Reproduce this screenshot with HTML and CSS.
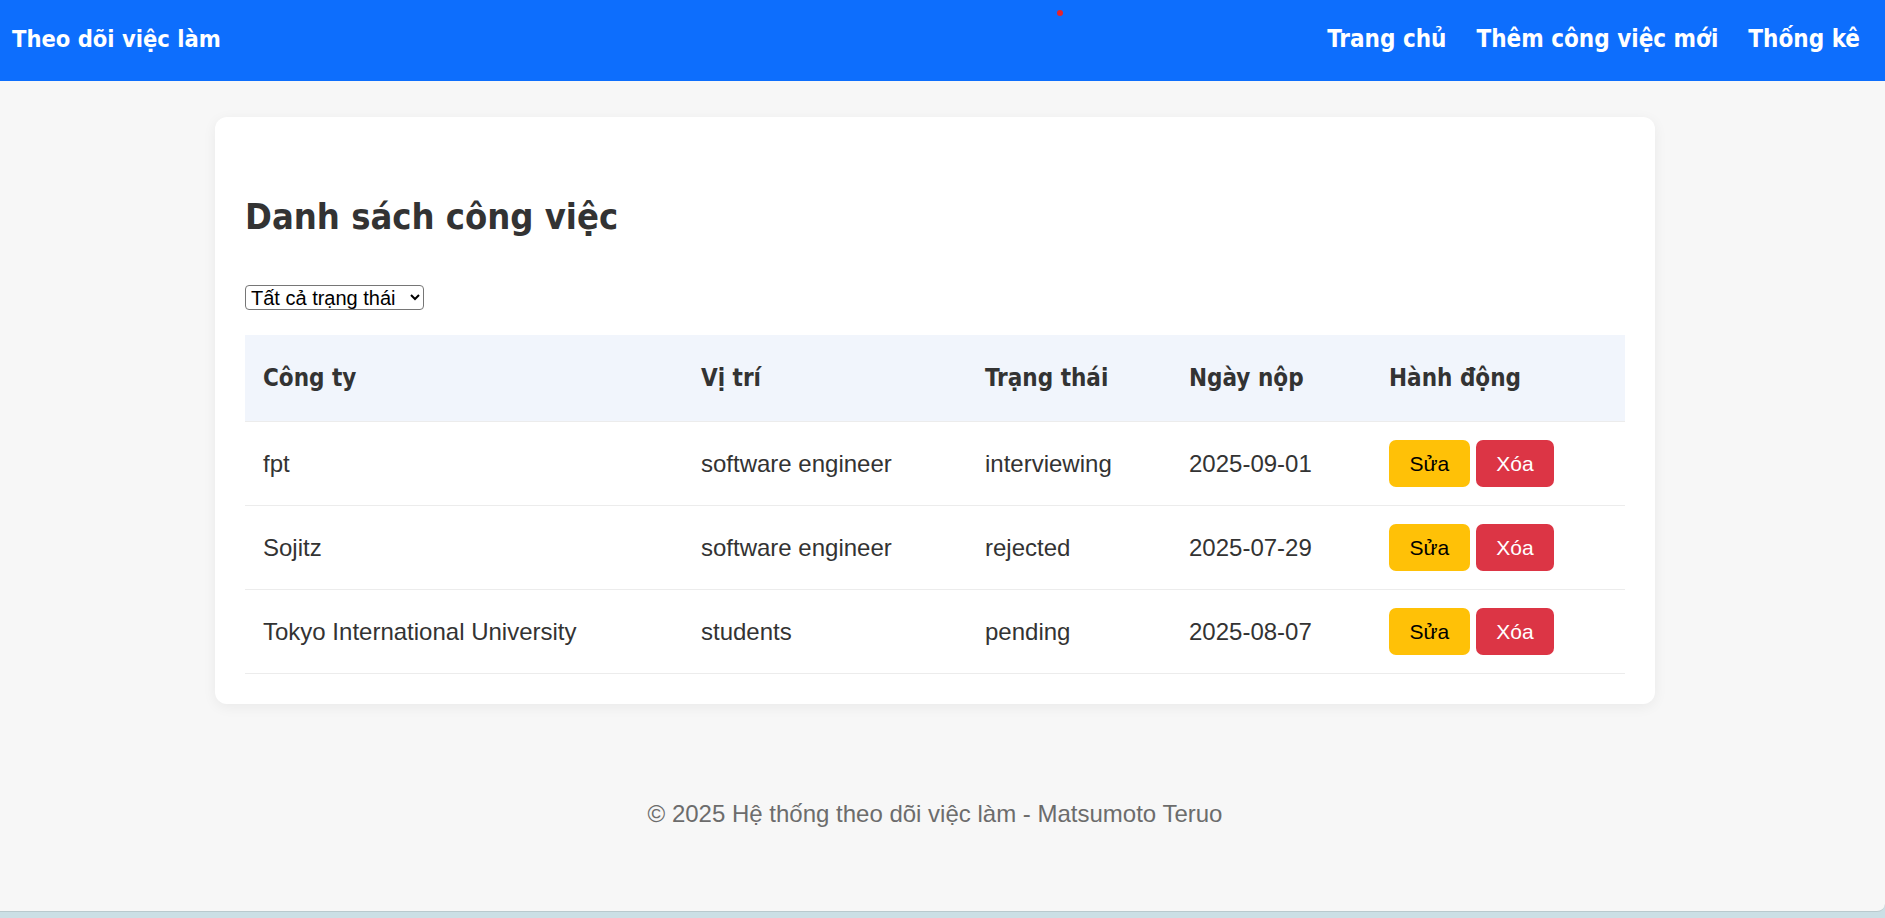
FILE: index.html
```html
<!DOCTYPE html>
<html lang="vi">
<head>
<meta charset="utf-8">
<title>Theo dõi việc làm</title>
<link rel="stylesheet" href="styles.css">
</head>
<body>
<div class="window">
  <header class="topbar">
    <div class="brand">Theo dõi việc làm</div>
    <nav class="nav">
      <a href="#">Trang chủ</a>
      <a href="#">Thêm công việc mới</a>
      <a href="#">Thống kê</a>
    </nav>
    <span class="dot"></span>
  </header>

  <main class="main">
    <section class="card">
      <h2 class="title">Danh sách công việc</h2>
      <div class="filter">
        <select class="status-select">
          <option>Tất cả trạng thái</option>
          <option>pending</option>
          <option>interviewing</option>
          <option>rejected</option>
        </select>
      </div>
      <table class="jobs">
        <thead>
          <tr>
            <th class="c-company">Công ty</th>
            <th class="c-position">Vị trí</th>
            <th class="c-status">Trạng thái</th>
            <th class="c-date">Ngày nộp</th>
            <th class="c-actions">Hành động</th>
          </tr>
        </thead>
        <tbody>
          <tr>
            <td>fpt</td>
            <td>software engineer</td>
            <td>interviewing</td>
            <td>2025-09-01</td>
            <td><div class="actions"><button class="btn btn-edit">Sửa</button><button class="btn btn-delete">Xóa</button></div></td>
          </tr>
          <tr>
            <td>Sojitz</td>
            <td>software engineer</td>
            <td>rejected</td>
            <td>2025-07-29</td>
            <td><div class="actions"><button class="btn btn-edit">Sửa</button><button class="btn btn-delete">Xóa</button></div></td>
          </tr>
          <tr>
            <td>Tokyo International University</td>
            <td>students</td>
            <td>pending</td>
            <td>2025-08-07</td>
            <td><div class="actions"><button class="btn btn-edit">Sửa</button><button class="btn btn-delete">Xóa</button></div></td>
          </tr>
        </tbody>
      </table>
    </section>
  </main>

  <footer class="footer">© 2025 Hệ thống theo dõi việc làm - Matsumoto Teruo</footer>
</div>
</body>
</html>
```

FILE: styles.css
```css
html, body {
  margin: 0;
  padding: 0;
}

body {
  background: #cbdfe5;
  font-family: "Liberation Sans", Arial, sans-serif;
  font-size: 24px;
  color: #333;
  height: 918px;
  overflow: hidden;
}

.window {
  height: 911px;
  background: #f7f7f7;
  border-bottom: 1px solid #b9c9cd;
  border-bottom-right-radius: 8px;
  display: flex;
  flex-direction: column;
}

.topbar {
  position: relative;
  height: 81px;
  flex: none;
  background: #0d6efd;
  display: flex;
  align-items: center;
  justify-content: space-between;
  padding: 0 25px 3px 12px;
  box-sizing: border-box;
  font-family: "DejaVu Sans Condensed", "DejaVu Sans", sans-serif;
  font-weight: bold;
  font-size: 24px;
  color: #fff;
}

.brand {
  color: #fff;
  font-size: 23.5px;
}

.nav {
  display: flex;
  gap: 30px;
}

.nav a {
  color: #fff;
  text-decoration: none;
}

.dot {
  position: absolute;
  left: 1057px;
  top: 10px;
  width: 6px;
  height: 6px;
  border-radius: 50%;
  background: #e8232a;
}

.main {
  padding-right: 15px;
}

.card {
  width: 1440px;
  box-sizing: border-box;
  margin: 36px auto 0;
  padding: 30px;
  background: #fff;
  border-radius: 12px;
  box-shadow: 0 3px 14px rgba(0, 0, 0, 0.06);
}

.title {
  margin: 49px 0 45px;
  font-family: "DejaVu Sans Condensed", "DejaVu Sans", sans-serif;
  font-weight: bold;
  font-size: 36px;
  line-height: 42px;
  color: #333;
}

.filter {
  margin-bottom: 24px;
}

.status-select {
  font-family: "Liberation Sans", Arial, sans-serif;
  font-size: 20px;
  width: 179px;
  height: 25px;
  padding: 0 1px;
  border: 1px solid #767676;
  border-radius: 4px;
  background: #fff;
  color: #000;
}

.jobs {
  width: 100%;
  border-collapse: collapse;
  table-layout: fixed;
}

.jobs th {
  box-sizing: border-box;
  background: #f1f5fc;
  text-align: left;
  padding: 29px 18px;
  line-height: 28px;
  font-family: "DejaVu Sans Condensed", "DejaVu Sans", sans-serif;
  font-weight: bold;
  font-size: 24px;
  color: #333;
  border-bottom: 1px solid #ececec;
}

.c-company { width: 438px; }
.c-position { width: 284px; }
.c-status { width: 204px; }
.c-date { width: 200px; }
.c-actions { width: 254px; }

.jobs td {
  padding: 18px;
  vertical-align: middle;
  border-bottom: 1px solid #ececec;
  color: #333;
  line-height: 28px;
}

.actions {
  display: flex;
  gap: 6px;
}

.btn {
  height: 47px;
  padding: 0 20.5px;
  border: none;
  border-radius: 7px;
  font-family: "Liberation Sans", Arial, sans-serif;
  font-size: 21px;
  cursor: pointer;
}

.btn-edit {
  background: #ffc107;
  color: #000;
}

.btn-delete {
  background: #dc3545;
  color: #fff;
}

.footer {
  margin-top: 96px;
  padding-right: 15px;
  text-align: center;
  color: #6c6c6c;
  font-size: 24px;
  line-height: 28px;
}
```
